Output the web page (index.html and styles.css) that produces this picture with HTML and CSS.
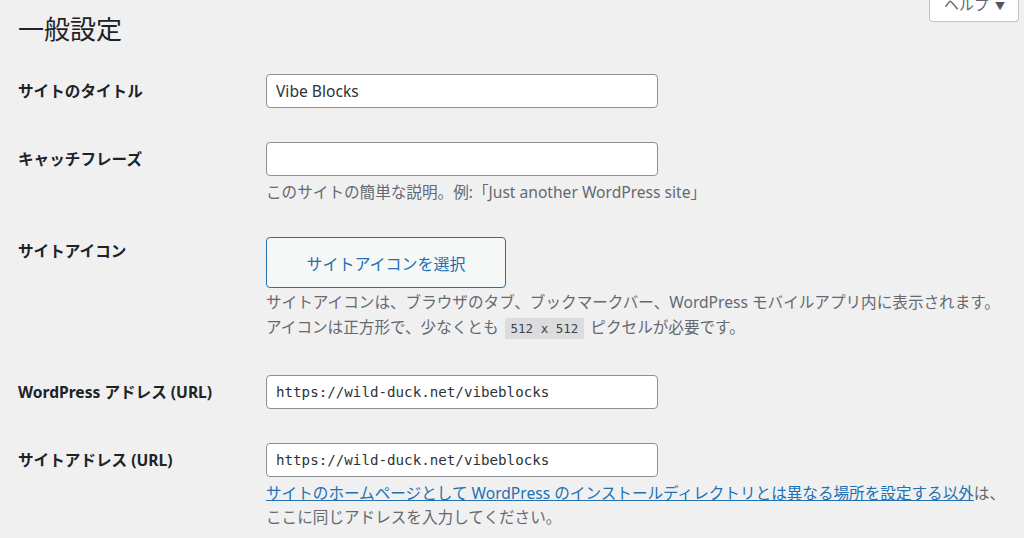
FILE: index.html
```html
<!DOCTYPE html>
<html lang="ja">
<head>
	<meta charset="UTF-8">
	<title>一般設定</title>
	<link rel="stylesheet" href="styles.css">
</head>
<body>
	<div class="help-tab">ヘルプ <span class="caret">▼</span></div>
	<div class="wrap">
		<h1>一般設定</h1>
		<div class="form">
			<div class="row">
				<label class="label" for="blogname">サイトのタイトル</label>
				<div class="field">
					<input id="blogname" class="text" type="text" value="Vibe Blocks">
				</div>
			</div>
			<div class="row">
				<label class="label" for="tagline">キャッチフレーズ</label>
				<div class="field">
					<input id="tagline" class="text" type="text" value="">
					<p class="desc">このサイトの簡単な説明。例:「Just another WordPress site」</p>
				</div>
			</div>
			<div class="row row-icon">
				<div class="label">サイトアイコン</div>
				<div class="field">
					<button class="btn" type="button">サイトアイコンを選択</button>
					<p class="desc desc-tall">サイトアイコンは、ブラウザのタブ、ブックマークバー、WordPress モバイルアプリ内に表示されます。<br>アイコンは正方形で、少なくとも <code>512 x 512</code> ピクセルが必要です。</p>
				</div>
			</div>
			<div class="row">
				<label class="label" for="siteurl">WordPress アドレス (URL)</label>
				<div class="field">
					<input id="siteurl" class="text code-input" type="text" value="https://wild-duck.net/vibeblocks">
				</div>
			</div>
			<div class="row">
				<label class="label" for="home">サイトアドレス (URL)</label>
				<div class="field">
					<input id="home" class="text code-input" type="text" value="https://wild-duck.net/vibeblocks">
					<p class="desc"><a href="#">サイトのホームページとして WordPress のインストールディレクトリとは異なる場所を設定する以外</a>は、<br>ここに同じアドレスを入力してください。</p>
				</div>
			</div>
		</div>
	</div>
</body>
</html>
```

FILE: styles.css
```css
*{
	margin:0;
	padding:0;
	box-sizing:border-box;
}
body{
	background:#f0f0f1;
	color:#1d2327;
	font-family:"Noto Sans","Noto Sans CJK JP",sans-serif;
	font-size:15.6px;
	line-height:24px;
	width:1024px;
	height:538px;
	overflow:hidden;
	position:relative;
}
.wrap{
	padding:14px 20px 0 18px;
}
h1{
	font-size:26px;
	font-weight:400;
	line-height:30px;
	margin-bottom:30px;
}
.help-tab{
	position:absolute;
	top:-8px;
	left:929px;
	width:90px;
	height:30px;
	background:#fff;
	border:1px solid #c3c4c7;
	border-top:none;
	border-radius:0 0 4px 4px;
	color:#646970;
	font-size:15px;
	line-height:24px;
	padding-left:14px;
}
.help-tab .caret{
	font-size:10px;
	color:#50575e;
	margin-left:2px;
}
.form{
	display:flex;
	flex-direction:column;
	gap:34px;
}
.row{
	display:grid;
	grid-template-columns:248px 1fr;
}
.label{
	font-weight:700;
	padding-top:5px;
	line-height:24px;
	white-space:nowrap;
}
.row-icon{
	margin-top:-1px;
}
.row-icon .label{
	padding-top:2px;
}
.text{
	display:block;
	width:392px;
	height:34px;
	border:1px solid #8c8f94;
	border-radius:4px;
	background:#fff;
	color:#2c3338;
	font-family:inherit;
	font-size:15.6px;
	padding:0 9px;
	outline:none;
}
.code-input{
	font-family:"DejaVu Sans Mono",monospace;
	font-size:14.2px;
}
.desc{
	margin-top:4px;
	color:#646970;
	line-height:24px;
	white-space:nowrap;
}
.desc-tall{
	margin-top:2px;
	line-height:25px;
}
.desc a{
	color:#2271b1;
	text-decoration:underline;
}
code{
	font-family:"DejaVu Sans Mono",monospace;
	font-size:12.5px;
	background:#dcdcde;
	color:#3c434a;
	padding:3px 6px 3px;
	margin:0 2px;
}
.btn{
	display:block;
	width:240px;
	height:51px;
	border:1px solid #2271b1;
	border-radius:4px;
	background:#f6f7f7;
	color:#2271b1;
	font-family:inherit;
	font-size:16px;
	cursor:pointer;
}
```
